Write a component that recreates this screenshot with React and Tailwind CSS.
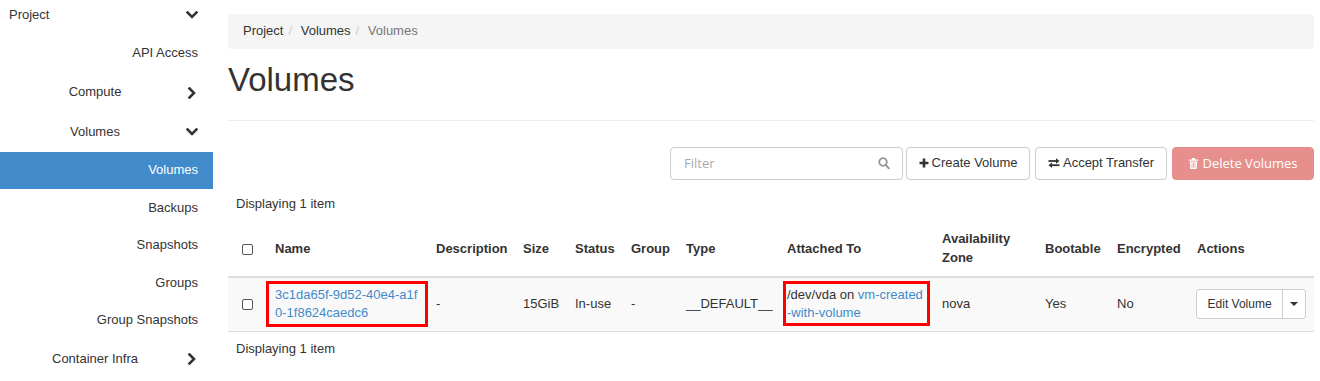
import React from 'react';

const ChevronDown = () => (
  <svg width="12" height="8" viewBox="0 0 12 8" className="shrink-0">
    <path d="M1.5 1.5 L6 6 L10.5 1.5" fill="none" stroke="#333" strokeWidth="2.6" strokeLinecap="square" />
  </svg>
);

const ChevronRight = () => (
  <svg width="12" height="12" viewBox="0 0 12 12" className="shrink-0">
    <path d="M3.5 1.5 L8 6 L3.5 10.5" fill="none" stroke="#333" strokeWidth="2.6" strokeLinecap="square" />
  </svg>
);

const Checkbox = () => (
  <span className="inline-block w-[11px] h-[11px] border border-[#555] rounded-[2px] bg-white align-middle" />
);

const SideGroup = ({ label, open, h }) => (
  <div className={`flex items-center pr-[15px] ${h}`}>
    <span className="flex-1 text-center pl-[4px]">{label}</span>
    {open ? <ChevronDown /> : <ChevronRight />}
  </div>
);

const SideLeaf = ({ label, active, h }) => (
  <div className={`flex items-center justify-end pr-[15px] ${h} ${active ? 'bg-[#428bca] text-white' : ''}`}>
    {label}
  </div>
);

const Sidebar = () => (
  <aside className="w-[213px] shrink-0 -mt-[4px] text-[13px] text-[#333]">
    <div className="flex items-center justify-between pl-[9px] pr-[15px] h-[38px]">
      <span>Project</span>
      <ChevronDown />
    </div>
    <SideLeaf label="API Access" h="h-[39px]" />
    <SideGroup label="Compute" h="h-[39px]" />
    <SideGroup label="Volumes" open h="h-[40px]" />
    <SideLeaf label="Volumes" active h="h-[37px]" />
    <SideLeaf label="Backups" h="h-[38px]" />
    <SideLeaf label="Snapshots" h="h-[37px]" />
    <SideLeaf label="Groups" h="h-[38px]" />
    <SideLeaf label="Group Snapshots" h="h-[37px]" />
    <SideGroup label="Container Infra" h="h-[40px]" />
  </aside>
);

const cols = [39, 161, 87, 52, 56, 55, 101, 155, 103, 72, 80, 125];

const headers = ['Name', 'Description', 'Size', 'Status', 'Group', 'Type', 'Attached To', 'Availability Zone', 'Bootable', 'Encrypted', 'Actions'];

export default function App() {
  return (
    <div className="flex w-[1320px] h-[381px] overflow-hidden bg-white font-['Liberation_Sans',Arial,sans-serif] text-[13px] leading-[1.42857] text-[#333]">
      <Sidebar />
      <main className="flex-1 pl-[15px] pr-[6px]">
        <nav className="mt-[14px] bg-[#f5f5f5] rounded-[4px] px-[15px] py-[8px] flex items-center">
          <span>Project</span>
          <span className="px-[5px] text-[#ccc]">/&nbsp;</span>
          <span>Volumes</span>
          <span className="px-[5px] text-[#ccc]">/&nbsp;</span>
          <span className="text-[#777]">Volumes</span>
        </nav>

        <h1 className="mt-[13px] text-[33px] leading-[1.1] text-[#333]">Volumes</h1>
        <div className="mt-[22px] border-t border-[#eee]" />

        <div className="mt-[26px] flex justify-end items-center">
          <div className="w-[233px] h-[33px] border border-[#ccc] rounded-[4px] flex items-center justify-between pl-[13px] pr-[12px] mr-[3px]">
            <span className="font-['Open_Sans',sans-serif] text-[13px] text-[#aaa]">Filter</span>
            <svg width="12" height="13" viewBox="0 0 12 13">
              <circle cx="5" cy="5" r="3.8" fill="none" stroke="#999" strokeWidth="1.8" />
              <path d="M7.8 8 L10.8 11.3" stroke="#999" strokeWidth="2" strokeLinecap="round" />
            </svg>
          </div>
          <button className="h-[33px] w-[124px] border border-[#ccc] rounded-[4px] bg-white flex items-center gap-[3px] mr-[5px] justify-center whitespace-nowrap">
            <svg width="10" height="10" viewBox="0 0 10 10">
              <path d="M5 0.5 V9.5 M0.5 5 H9.5" stroke="#333" strokeWidth="2.6" />
            </svg>
            <span>Create Volume</span>
          </button>
          <button className="h-[33px] w-[132px] border border-[#ccc] rounded-[4px] bg-white flex items-center gap-[3px] mr-[5px] justify-center whitespace-nowrap">
            <svg width="12" height="10" viewBox="0 0 12 10">
              <path d="M0.5 3 H9" stroke="#333" strokeWidth="1.8" />
              <path d="M8 0.2 L11.5 3 L8 5.8 Z" fill="#333" />
              <path d="M3 7.2 H11.5" stroke="#333" strokeWidth="1.8" />
              <path d="M4 4.4 L0.5 7.2 L4 10 Z" fill="#333" />
            </svg>
            <span>Accept Transfer</span>
          </button>
          <button className="h-[33px] w-[142px] border border-[#e38d8a] rounded-[4px] bg-[#e68f8c] text-white flex items-center justify-center gap-[5px] whitespace-nowrap font-['Open_Sans',sans-serif] text-[13px]">
            <svg width="9" height="11" viewBox="0 0 9 11">
              <path d="M0 1.6 H9 V2.8 H0 Z M3 0 H6 V1.6 H3 Z" fill="#fff" />
              <path d="M0.8 3.4 H8.2 L7.6 11 H1.4 Z" fill="#fff" />
              <path d="M3 4.6 V9.8 M4.5 4.6 V9.8 M6 4.6 V9.8" stroke="#e68f8c" strokeWidth="0.7" />
            </svg>
            <span>Delete Volumes</span>
          </button>
        </div>

        <div className="mt-[15px] pl-[8px]">Displaying 1 item</div>

        <table className="table-fixed border-collapse w-[1086px] mt-[9px]">
          <colgroup>
            {cols.map((w, i) => (
              <col key={i} style={{ width: w }} />
            ))}
          </colgroup>
          <thead>
            <tr className="border-b-2 border-[#ddd]">
              <th className="p-[8px] text-center align-middle">
                <Checkbox />
              </th>
              {headers.map((h) => (
                <th key={h} className="p-[8px] text-left font-bold align-middle">
                  {h}
                </th>
              ))}
            </tr>
          </thead>
          <tbody>
            <tr className="bg-[#f9f9f9] border-b border-[#ddd]">
              <td className="p-[8px] text-center align-middle">
                <Checkbox />
              </td>
              <td className="p-[8px] align-middle relative break-all">
                <span className="text-[#428bca]">3c1da65f-9d52-40e4-a1f0-1f8624caedc6</span>
                <span className="absolute left-[-1px] right-[0px] top-[3px] bottom-[4px] border-[3px] border-[#f00]" />
              </td>
              <td className="p-[8px] align-middle">-</td>
              <td className="p-[8px] align-middle">15GiB</td>
              <td className="p-[8px] align-middle">In-use</td>
              <td className="p-[8px] align-middle">-</td>
              <td className="p-[8px] align-middle whitespace-nowrap">__DEFAULT__</td>
              <td className="p-[8px] align-middle relative break-all">
                /dev/vda on <span className="text-[#428bca]">vm-created-with-volume</span>
                <span className="absolute left-[4px] right-[4px] top-[3px] bottom-[5px] border-[3px] border-[#f00]" />
              </td>
              <td className="p-[8px] align-middle">nova</td>
              <td className="p-[8px] align-middle">Yes</td>
              <td className="p-[8px] align-middle">No</td>
              <td className="py-[8px] pl-[7px] pr-[8px] align-middle">
                <div className="flex h-[30px] text-[12px]">
                  <button className="w-[88px] border border-[#ccc] rounded-l-[3px] bg-white whitespace-nowrap">Edit Volume</button>
                  <button className="w-[24px] -ml-px border border-[#ccc] rounded-r-[3px] bg-white flex items-center justify-center">
                    <svg width="8" height="4" viewBox="0 0 8 4">
                      <path d="M0 0 H8 L4 4 Z" fill="#333" />
                    </svg>
                  </button>
                </div>
              </td>
            </tr>
          </tbody>
        </table>

        <div className="pt-[8px] pl-[8px]">Displaying 1 item</div>
      </main>
    </div>
  );
}
